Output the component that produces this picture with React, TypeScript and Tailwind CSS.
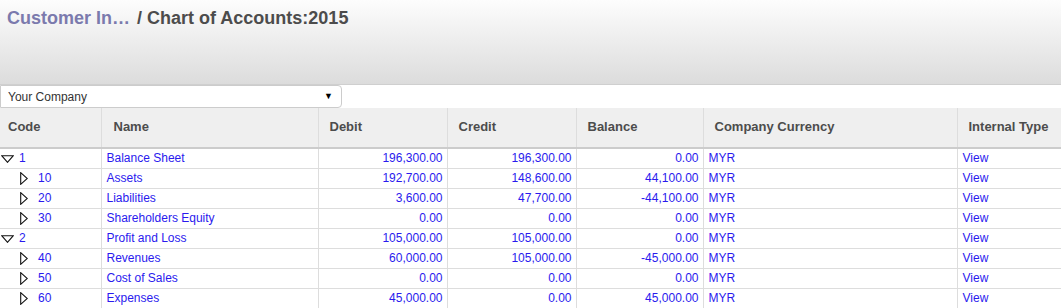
import React from "react";

type Row = {
  level: 0 | 1;
  code: string;
  name: string;
  debit: string;
  credit: string;
  balance: string;
};

const rows: Row[] = [
  { level: 0, code: "1", name: "Balance Sheet", debit: "196,300.00", credit: "196,300.00", balance: "0.00" },
  { level: 1, code: "10", name: "Assets", debit: "192,700.00", credit: "148,600.00", balance: "44,100.00" },
  { level: 1, code: "20", name: "Liabilities", debit: "3,600.00", credit: "47,700.00", balance: "-44,100.00" },
  { level: 1, code: "30", name: "Shareholders Equity", debit: "0.00", credit: "0.00", balance: "0.00" },
  { level: 0, code: "2", name: "Profit and Loss", debit: "105,000.00", credit: "105,000.00", balance: "0.00" },
  { level: 1, code: "40", name: "Revenues", debit: "60,000.00", credit: "105,000.00", balance: "-45,000.00" },
  { level: 1, code: "50", name: "Cost of Sales", debit: "0.00", credit: "0.00", balance: "0.00" },
  { level: 1, code: "60", name: "Expenses", debit: "45,000.00", credit: "0.00", balance: "45,000.00" },
];

const DownTri = () => (
  <svg width="13" height="8" viewBox="0 0 13 8" className="shrink-0">
    <path d="M0.7 0.7 L12.3 0.7 L6.5 7.3 Z" fill="none" stroke="#111" strokeWidth="1.1" />
  </svg>
);

const RightTri = () => (
  <svg width="8" height="13" viewBox="0 0 8 13" className="shrink-0">
    <path d="M0.7 0.7 L7.3 6.5 L0.7 12.3 Z" fill="none" stroke="#111" strokeWidth="1.1" />
  </svg>
);

const headers = [
  { t: "Code", pl: "pl-[8px]" },
  { t: "Name", pl: "pl-[12px]" },
  { t: "Debit", pl: "pl-[11px]" },
  { t: "Credit", pl: "pl-[11px]" },
  { t: "Balance", pl: "pl-[11px]" },
  { t: "Company Currency", pl: "pl-[11px]" },
  { t: "Internal Type", pl: "pl-[11px]" },
];

export default function App() {
  return (
    <div className="w-[1061px] h-[308px] overflow-hidden bg-white font-['Liberation_Sans',Arial,sans-serif]">
      <div className="h-[85px] bg-gradient-to-b from-[#fdfdfd] to-[#dcdcdc] border-b border-[#cfcfcf] px-[7px] pt-[7px]">
        <div className="text-[18px] font-bold leading-[22px] whitespace-nowrap">
          <span className="text-[#7b7aad]">Customer In…</span>
          <span className="text-[#4c4c4c] ml-[2px]"> / Chart of Accounts:2015</span>
        </div>
      </div>
      <div className="h-[23px] flex items-start">
        <div className="w-[342px] h-[23px] border border-[#cccccc] rounded-r-[4px] bg-white flex items-center justify-between pl-[7px] pr-[8px]">
          <span className="text-[12px] text-[#333] leading-none">Your Company</span>
          <span className="text-[9px] text-black leading-none">▼</span>
        </div>
      </div>
      <table className="table-fixed border-collapse w-[1061px]">
        <colgroup>
          <col className="w-[101px]" />
          <col className="w-[217px]" />
          <col className="w-[129px]" />
          <col className="w-[129px]" />
          <col className="w-[127px]" />
          <col className="w-[254px]" />
          <col className="w-[104px]" />
        </colgroup>
        <thead>
          <tr className="bg-[#efefef] h-[40px] border-b-[2px] border-[#cccccc]">
            {headers.map((h, i) => (
              <th
                key={h.t}
                className={`p-0 text-left font-bold text-[13px] text-[#4c4c4c] align-middle ${i > 0 ? "border-l border-[#dddddd]" : ""}`}
              >
                <span className={`block ${h.pl} pb-[2px] whitespace-nowrap`}>{h.t}</span>
              </th>
            ))}
          </tr>
        </thead>
        <tbody>
          {rows.map((r) => (
            <tr key={r.code} className="h-[20px] border-b border-[#dddddd] text-[12px] text-[#2a1aee]">
              <td className="p-0">
                {r.level === 0 ? (
                  <div className="flex items-center pl-[1px]">
                    <DownTri />
                    <span className="ml-[5px] leading-[19px]">{r.code}</span>
                  </div>
                ) : (
                  <div className="flex items-center pl-[20px]">
                    <RightTri />
                    <span className="ml-[10px] leading-[19px]">{r.code}</span>
                  </div>
                )}
              </td>
              <td className="p-0 pl-[5px] border-l border-[#dddddd] leading-[19px]">{r.name}</td>
              <td className="p-0 pr-[4px] border-l border-[#dddddd] text-right leading-[19px]">{r.debit}</td>
              <td className="p-0 pr-[4px] border-l border-[#dddddd] text-right leading-[19px]">{r.credit}</td>
              <td className="p-0 pr-[4px] border-l border-[#dddddd] text-right leading-[19px]">{r.balance}</td>
              <td className="p-0 pl-[5px] border-l border-[#dddddd] leading-[19px]">MYR</td>
              <td className="p-0 pl-[5px] border-l border-[#dddddd] leading-[19px]">View</td>
            </tr>
          ))}
        </tbody>
      </table>
    </div>
  );
}
